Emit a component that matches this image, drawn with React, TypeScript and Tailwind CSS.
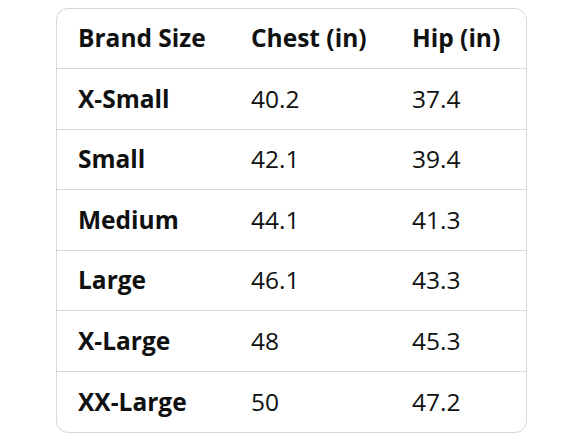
const ROWS = [
  ['X-Small', '40.2', '37.4'],
  ['Small', '42.1', '39.4'],
  ['Medium', '44.1', '41.3'],
  ['Large', '46.1', '43.3'],
  ['X-Large', '48', '45.3'],
  ['XX-Large', '50', '47.2'],
];

export default function App() {
  return (
    <div className="w-[588px] h-[441px] bg-white pt-2 pl-14" style={{ fontFamily: '"Open Sans", sans-serif' }}>
      <div className="w-[471px] rounded-xl border border-[#d5d9d9] overflow-hidden text-[24.5px] leading-none text-[#0f1111]">
        <div className="grid grid-cols-[173px_161px_1fr] h-[60px] items-center pl-[21px] font-bold border-b border-[#d5d9d9]">
          <span>Brand Size</span>
          <span>Chest (in)</span>
          <span>Hip (in)</span>
        </div>
        {ROWS.map((r, i) => (
          <div
            key={r[0]}
            className={`grid grid-cols-[173px_161px_1fr] h-[60.5px] items-center pl-[21px] ${i < ROWS.length - 1 ? 'border-b border-[#d5d9d9]' : ''}`}
          >
            <span className="font-bold">{r[0]}</span>
            <span>{r[1]}</span>
            <span>{r[2]}</span>
          </div>
        ))}
      </div>
    </div>
  );
}
